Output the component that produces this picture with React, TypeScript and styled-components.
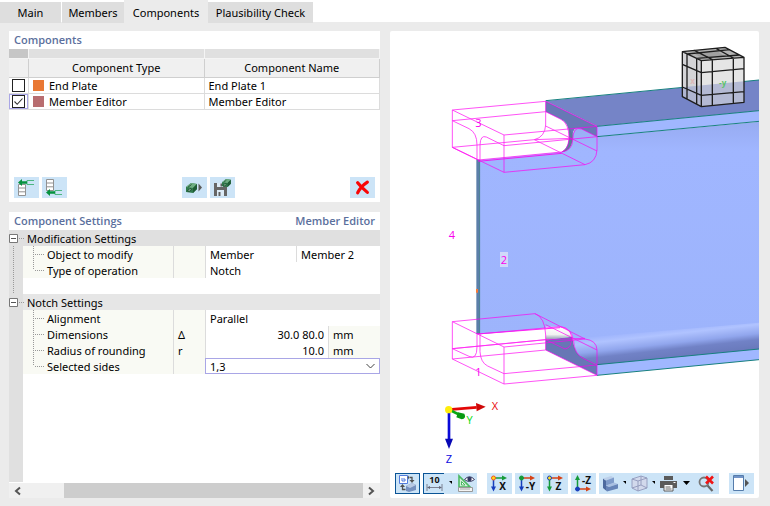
import React, { useState } from "react";
import styled, { createGlobalStyle } from "styled-components";

const GlobalStyle = createGlobalStyle`
  *, *::before, *::after { box-sizing: border-box; }
  body { margin: 0; background: #fff; }
  body, button, select, input { font-family: "Noto Sans", "Open Sans", sans-serif; font-size: 11px; color: #000; }
  button { border: 0; padding: 0; margin: 0; background: none; cursor: pointer; }
  svg { display: block; flex: none; overflow: visible; }
`;

const Page = styled.div`
  display: flex;
  flex-direction: column;
  min-height: 100vh;
`;

const TabBar = styled.nav`
  display: flex;
  align-items: flex-end;
  height: 23px;
  background: linear-gradient(#fff 22px, #ebebeb 22px);
`;

const Tab = styled.button<{ $active?: boolean; $width: number }>`
  width: ${(p) => p.$width}px;
  height: ${(p) => (p.$active ? 23 : 21)}px;
  padding-top: ${(p) => (p.$active ? 2 : 0)}px;
  margin-right: ${(p) => (p.$width === 61 ? 1 : 0)}px;
  background: ${(p) => (p.$active ? "#ebebeb" : "#dedede")};
  white-space: nowrap;
`;

const Workspace = styled.main`
  flex: 1;
  display: grid;
  grid-template-columns: 371fr 369fr;
  gap: 10px;
  padding: 8px 11px 8px 9px;
  background: #ebebeb;
`;

const LeftColumn = styled.div`
  display: flex;
  flex-direction: column;
  gap: 10px;
  min-width: 0;
`;

const Panel = styled.section<{ $grow?: boolean }>`
  display: flex;
  flex-direction: column;
  flex: ${(p) => (p.$grow ? "1" : "none")};
  min-height: ${(p) => (p.$grow ? 0 : 171)}px;
  min-width: 0;
  background: #fff;
`;

const PanelHeader = styled.header`
  display: flex;
  justify-content: space-between;
  height: 18px;
  padding: 0 5px;
  font-family: "Open Sans", sans-serif;
  line-height: 18px;
  font-weight: 600;
  color: #5b6f9d;
`;

const PanelTitle = styled.h2`
  margin: 0;
  font-size: 11px;
  font-weight: 600;
`;

const ComponentTable = styled.table`
  width: 100%;
  table-layout: fixed;
  border-collapse: separate;
  border-spacing: 0;

  th, td { padding: 0; border-right: 1px solid #dcdcdc; border-bottom: 1px solid #dcdcdc; font-weight: 400; }
  td { height: 16px; padding: 0 4px; line-height: 15px; }
  td:first-child { padding: 0; }
`;

const StripCell = styled.td<{ $dark?: boolean }>`
  && { height: 10px; background: ${(p) => (p.$dark ? "#c6c6c6" : "#e0e0e0")}; border-color: #f4f4f4; }
`;

const HeadCell = styled.th`
  && { height: 19px; background: #f0f0f0; border-color: #cfcfcf; line-height: 18px; }
`;

const CheckCell = styled.td<{ $focused?: boolean }>`
  && { box-shadow: ${(p) => (p.$focused ? "inset 0 0 0 1px #a9a6e6" : "none")}; }
`;

const CheckLabel = styled.label`
  display: flex;
  justify-content: center;
`;

const Check = styled.input`
  appearance: none;
  width: 13px;
  height: 13px;
  margin: 0;
  border: 1px solid #222;
  background: #fff;
  &:checked {
    background: #fff url("data:image/svg+xml,%3Csvg xmlns='http://www.w3.org/2000/svg' viewBox='0 0 11 11'%3E%3Cpath d='M1.5 5.5l2.7 2.8 5.3-5.8' fill='none' stroke='%23333' stroke-width='1.1'/%3E%3C/svg%3E");
  }
`;

const TypeLabel = styled.span`
  display: flex;
  align-items: center;
  gap: 5px;
`;

const Swatch = styled.span<{ $color: string }>`
  width: 11px;
  height: 11px;
  background: ${(p) => p.$color};
`;

const ActionBar = styled.div`
  display: flex;
  gap: 3px;
  margin-top: auto;
  padding: 0 5px 4px;
`;

const Spacer = styled.span`
  flex: 1;
`;

const IconButton = styled.button<{ $width?: number; $on?: boolean }>`
  display: flex;
  align-items: center;
  justify-content: center;
  flex: none;
  width: ${(p) => p.$width ?? 25}px;
  height: 21px;
  background: #cce4f7;
  box-shadow: ${(p) => (p.$on ? "inset 0 0 0 1px #0a5496" : "none")};
`;

const SettingsBody = styled.div`
  flex: 1;
  background: linear-gradient(to right, #e0e0e0 14px, #fff 14px);
`;

const SettingsTable = styled.table`
  width: 100%;
  table-layout: fixed;
  border-collapse: separate;
  border-spacing: 0;

  td, th { height: 16px; padding: 2px 4px 0; line-height: 14px; font-weight: 400; text-align: left; white-space: nowrap; }
`;

const GroupCell = styled.th<{ $shade: string }>`
  && { padding: 0; background: linear-gradient(to right, #e0e0e0 14px, ${(p) => p.$shade} 14px); }
`;

const GroupLabel = styled.div`
  display: flex;
  align-items: center;
  gap: 1px;
  height: 16px;
`;

const GroupName = styled.span`
  padding: 2px 0 0 2px;
`;

const GutterCell = styled.td`
  && { padding: 0 4px; background: #e0e0e0; }
`;

const NameCell = styled.th`
  && { padding: 0 0 0 10px; background: #f9faf4; }
`;

const NameLabel = styled.div`
  display: flex;
  gap: 3px;
  height: 16px;
  line-height: 18px;
`;

const SymbolCell = styled.td`
  background: #f9faf4;
  border-left: 1px solid #dcdcdc;
`;

const ValueCell = styled.td<{ $right?: boolean; $unit?: boolean }>`
  border-left: 1px solid #dcdcdc;
  background: ${(p) => (p.$unit ? "#f9faf4" : "#fff")};
  && { text-align: ${(p) => (p.$right ? "right" : "left")}; }
`;

const BlankCell = styled.td`
  background: #fff;
`;

const SelectCell = styled.td`
  && { padding: 0; }
`;

const SelectBox = styled.div`
  display: grid;
  align-items: center;
  height: 16px;
  border: 1px solid #a9a6e6;
  background: #fff;
  > * { grid-area: 1 / 1; }
  > svg { justify-self: end; margin-right: 4px; pointer-events: none; }
`;

const SideSelect = styled.select`
  appearance: none;
  width: 100%;
  height: 14px;
  padding: 1px 4px 0;
  border: 0;
  outline: 0;
  line-height: 14px;
  background: transparent;
`;

const ScrollBar = styled.div`
  display: grid;
  grid-template-columns: 17px 38px 1fr 17px;
  height: 16px;
  border-top: 1px solid #fff;
  background: #f0f0f0;
`;

const ScrollButton = styled.button`
  display: flex;
  align-items: center;
  justify-content: center;
`;

const ScrollThumb = styled.span`
  grid-column: 3;
  background: #cdcdcd;
`;

const Viewport = styled.section`
  display: flex;
  flex-direction: column;
  min-width: 0;
  background: #fff;
  border-radius: 2px;
`;

const Scene = styled.svg`
  flex: 1;
  width: 100%;
  min-height: 0;
  overflow: hidden;
  text { font-family: "Open Sans", sans-serif; font-size: 33px; }
`;

const FaceMark = styled.text`
  && { font-size: 24px; font-weight: 700; }
`;

const ViewToolbar = styled.div`
  display: flex;
  justify-content: space-between;
  padding: 7px 5px 4px;
`;

const ToolSet = styled.div`
  display: flex;
  gap: 3px;
`;

const JoinedTools = styled.div`
  display: flex;
  background: #cce4f7;
`;

const DimensionButton = styled(IconButton)`
  border: 1px solid #0a5496;
  border-right: 0;
`;

const icon = { width: 17, height: 17, viewBox: "0 0 17 17", fill: "none" };

const InsertAbove = () => (
  <svg {...icon}>
    <path d="M.5 5.500h7v11h-7zM.5 9h7M.5 12.800h7" fill="#fff" stroke="#929292" />
    <path d="M16 1.500H9v4h7" stroke="#4db681" />
    <path d="M0 3.500 4 0v2.300h5v2.400H4V7z" fill="#07923f" />
  </svg>
);

const InsertBelow = () => (
  <svg {...icon}>
    <path d="M.5.500h7v11h-7zM.5 4h7M.5 7.800h7" fill="#fff" stroke="#929292" />
    <path d="M16 11.500H9v4h7" stroke="#4db681" />
    <path d="M0 13.500 4 10v2.300h5v2.400H4V17z" fill="#07923f" />
  </svg>
);

const Block = () => (
  <>
    <path d="M0 4 5 0l6 1v5L7 10 0 9z" fill="#2f7a4c" />
    <path d="M0 4 5 0l6 1-4 4z" fill="#6fae83" />
    <path d="M2 4.200 5.500 1.500M1.500 8 4 5.500l1.500 1L3 8.500z" stroke="#123d24" fill="#a9cfb4" strokeWidth=".8" />
    <path d="M7 5v5l4-4V1" fill="#1f5b35" />
  </>
);

const LoadBlock = () => (
  <svg {...icon}>
    <g transform="translate(0 4)"><Block /></g>
    <path d="M12.500 4.500 16 8.500 12.500 12.500z" fill="#5c5c5c" />
  </svg>
);

const SaveBlock = () => (
  <svg {...icon}>
    <path d="M0 4h11l2 2v11H0z" fill="#666" />
    <path d="M3 4h6v4H3z" fill="#dcebf7" />
    <path d="M6.500 4.500h1.500v3H6.500z" fill="#606060" />
    <path d="M3 11h7v6H3z" fill="#dcebf7" />
    <path d="M4.500 13h2v4h-2z" fill="#606060" />
    <g transform="translate(8 0) scale(.8)"><Block /></g>
  </svg>
);

const DeleteIcon = () => (
  <svg {...icon} width="15" height="15">
    <path d="M3 3q4 5 11 11M14 2.500Q7 7 3 14.500" stroke="#f90606" strokeWidth="3.600" strokeLinecap="round" />
  </svg>
);

const SyncViews = () => (
  <svg {...icon}>
    <path d="M.5.500h8v8h-8z" fill="#fff" stroke="#527bdc" />
    <path d="M3 3v3h3V4H4" stroke="#527bdc" />
    <path d="M10.500 2.500h2.500v3.500M3.500 11v3.500h3" stroke="#525252" strokeWidth="1.300" />
    <path d="m10.500 5 2.500 3 2.500-3zM1 12l2.500-3L6 12zM10 .5 8.500 2.500l1.500 2z" fill="#525252" />
    <path d="m7 11 6-3 4 2v5l-7 2-3-1z" fill="#7691bf" />
    <path d="m7 11 6-3 4 2-6 3z" fill="#b9cae4" />
  </svg>
);

const DimensionIcon = () => (
  <svg {...icon}>
    <text x="8.500" y="8" textAnchor="middle" fontSize="9" fontWeight="700" fill="#111">10</text>
    <path d="M1 9v7M16 9v7M2 12.500h13" stroke="#667" strokeWidth=".8" />
    <path d="M1 12.500 4 11v3zM16 12.500 13 11v3z" fill="#667" />
  </svg>
);

const RulerEye = () => (
  <svg {...icon}>
    <path d="M1 1v11h11z" fill="#d5efd9" stroke="#4bb862" strokeWidth="1.600" />
    <path d="M3.500 6.500v3.500h3.500z" fill="#fff" stroke="#4bb862" />
    <path d="M.5 12.500h14v4H.5z" fill="#f4f4f4" stroke="#999" />
    <path d="M3 13v2M5 13v2M7 13v2M9 13v2M11 13v2" stroke="#888" strokeWidth=".7" />
    <path d="M6.500 4.500q5-5.500 10 0-5 4-10 0z" fill="#fff" stroke="#3e4068" />
    <circle cx="11.500" cy="4" r="2.200" fill="#353862" />
  </svg>
);

type AxisProps = { letter: string; across: string; down: string; origin: string; ring: string; up?: boolean };
const AxisView = ({ letter, across, down, origin, ring, up }: AxisProps) => {
  const y = up ? 14 : 3;
  return (
    <svg {...icon}>
      <path d={`M2.500 ${y}h9`} stroke={across} strokeWidth="1.500" />
      <path d={`M11 ${y - 2.5}l5 2.500-5 2.500z`} fill={across} />
      <path d={up ? "M2.500 13V5" : "M2.500 3v9"} stroke={down} strokeWidth="1.500" />
      <path d={up ? "M0 5 2.500 0 5 5z" : "M0 11.500h5l-2.500 5z"} fill={down} />
      <circle cx="2.500" cy={y} r="2" fill={origin} stroke={ring} />
      <text x="11.500" y={up ? 9 : 15} textAnchor="middle" fontSize="10" fontWeight="700" fill="#111">{letter}</text>
    </svg>
  );
};

const SolidModel = () => (
  <svg {...icon}>
    <path d="M1 3.500 4 5.500V15.500L1 13z" fill="#4d6a9f" />
    <path d="M1 3.500 9 1l3 1.500L4 5.500z" fill="#bccfe9" />
    <path d="M4 5.500 12 2.500V8L8 9.500 4 10.500z" fill="#7e9bca" />
    <path d="M4 10.500 12 7.500l4 1.500L7 12z" fill="#a9c0e2" />
    <path d="M4 10.500 7 12l9-3v4.500L5 16.500 4 15.500z" fill="#6684b8" />
  </svg>
);

const WireBox = () => (
  <svg {...icon}>
    <path d="m1 4 9-3 6 2v10l-9 3-6-3z" fill="#d2d9ec" />
    <path d="m1 4 9-3 6 2-9 3zM1 4v9l6 3V6M7 16l9-3V3M10 1v9l6 3M10 10l-9 3" stroke="#9198bb" strokeWidth=".9" />
  </svg>
);

const PrinterIcon = () => (
  <svg {...icon}>
    <path d="M4 1h9v4H4zM0 6h17v7H0z" fill="#5b5b5b" />
    <path d="M4 9.500h9V16H4z" fill="#fff" stroke="#5b5b5b" />
    <path d="M5.500 12h5M5.500 14h6" stroke="#666" />
    <path d="M13.500 7.500h2" stroke="#fff" />
  </svg>
);

const FindCancel = () => (
  <svg {...icon}>
    <circle cx="6" cy="7" r="4.500" stroke="#777" strokeWidth="1.800" />
    <path d="m9.500 10.500 5 5.500" stroke="#676767" strokeWidth="2.200" />
    <path d="m8 1.500 7 7M15 1.500l-7 7" stroke="#f01515" strokeWidth="2.600" />
  </svg>
);

const SidePanelIcon = () => (
  <svg {...icon}>
    <path d="M.5.500h10v15H.5z" fill="#fff" stroke="#557cab" />
    <path d="M1 1h9v2H1z" fill="#7294c8" />
    <path d="m12 4 4 4-4 4z" fill="#555" />
  </svg>
);

const CaretIcon = ({ small }: { small?: boolean }) => (
  <svg width="7" height="5" viewBox="0 0 7 5">
    <path d={small ? "M2 0h3v3L4 2z" : "M0 0h7L3.500 4z"} fill="#000" />
  </svg>
);

const Chevron = () => (
  <svg width="9" height="6" viewBox="0 0 9 6"><path d="m.5 1 4 4 4-4" fill="none" stroke="#444" /></svg>
);

const ScrollArrow = ({ right }: { right?: boolean }) => (
  <svg width="7" height="8" viewBox="0 0 7 8">
    <path d={right ? "m1 0.500 4 3.500-4 3.500" : "m6 0.500-4 3.500 4 3.500"} fill="none" stroke="#555" strokeWidth="2" />
  </svg>
);

const Branch = ({ last }: { last?: boolean }) => (
  <svg width="11" height="16" viewBox="0 0 11 16">
    <path d={`M.5 0V${last ? 8 : 16}M2 8.500h9`} stroke="#999" strokeDasharray="1 1" fill="none" />
  </svg>
);

const Trunk = () => (
  <svg width="1" height="16" viewBox="0 0 1 16"><path d="M.5 0v16" stroke="#999" strokeDasharray="1 1" /></svg>
);

const Expander = () => (
  <svg width="9" height="9" viewBox="0 0 9 9">
    <path d="M.5.500h8v8h-8z" fill="#fff" stroke="#777" />
    <path d="M2 4.500h5" stroke="#555" />
  </svg>
);

const GroupRow = ({ label, shade }: { label: string; shade: string }) => (
  <tr>
    <GroupCell $shade={shade} colSpan={6}>
      <GroupLabel>
        <button aria-label={`Collapse ${label}`}><Expander /></button>
        <svg width="5" height="1" viewBox="0 0 5 1"><path d="M0 .500h5" stroke="#999" strokeDasharray="1 1" /></svg>
        <GroupName>{label}</GroupName>
      </GroupLabel>
    </GroupCell>
  </tr>
);

type RowProps = { name: string; symbol?: string; last?: boolean; trunk?: boolean; children: React.ReactNode };
const SettingRow = ({ name, symbol, last, trunk, children }: RowProps) => (
  <tr>
    <GutterCell>{trunk && <Trunk />}</GutterCell>
    <NameCell scope="row"><NameLabel><Branch last={last} />{name}</NameLabel></NameCell>
    <SymbolCell>{symbol}</SymbolCell>
    {children}
  </tr>
);

const BeamScene = () => (
  <Scene viewBox="15 18 1107 1305" preserveAspectRatio="xMidYMin meet" role="img" aria-label="Notched beam">
    <defs>
      <linearGradient id="web" x1="0" y1="0" x2="0" y2="1">
        <stop offset="0" stopColor="#97abf1" />
        <stop offset=".12" stopColor="#a0b6ff" />
        <stop offset=".9" stopColor="#9db4fc" />
        <stop offset="1" stopColor="#93a9f0" />
      </linearGradient>
      <linearGradient id="fillet" gradientUnits="userSpaceOnUse" x1="850" y1="910" x2="860" y2="1000">
        <stop offset="0" stopColor="#9fb5fd" />
        <stop offset=".2" stopColor="#b0c3ff" />
        <stop offset=".5" stopColor="#91a6ed" />
        <stop offset=".7" stopColor="#7182c6" />
        <stop offset="1" stopColor="#6979bb" />
      </linearGradient>
      <linearGradient id="hollow" x1="0" y1="0" x2="0" y2="1">
        <stop offset="0" stopColor="#fff" />
        <stop offset=".6" stopColor="#f2f3f2" />
        <stop offset="1" stopColor="#8a98ad" />
      </linearGradient>
    </defs>

    <path d="M285 405 530 381Q562 372 562 345Q560 308 585 306L640 335 1122 290V985L636 1020 600 1003Q568 992 565 940Q556 908 525 905L285 928z" fill="url(#web)" />
    <path d="M590 938 1122 893V978L636 1020 600 1003Q568 990 568 942z" fill="url(#fillet)" />
    <path d="M482 228 1122 165V257L636 304z" fill="#7584c7" />
    <path d="M636 304 1122 257V289L636 335z" fill="#a0b7ff" />
    <path d="M482 228 636 304V335L590 312Q565 302 563 330Q565 370 530 382Q555 365 552 325Q550 292 528 283L482 260z" fill="#6878b6" />
    <path d="M550 300Q560 340 545 368L530 382Q565 376 563 330z" fill="#5d7a9b" />
    <path d="M482 905 530 905Q555 912 558 935L482 944z" fill="url(#hollow)" />
    <path d="M482 944 562 935Q568 985 590 995L636 1019V1051L482 975z" fill="#6777b5" />
    <path d="M636 1019 1122 972V1004L636 1051z" fill="#a0b7ff" />
    <path d="M274 404H285V927H274z" fill="#5b7fa9" />
    <path d="M482 227 1122 165M636 304 1122 257M636 335 1122 289M636 1019 1122 972M636 1051 1122 1004" stroke="#17807f" strokeWidth="3" fill="none" />
    <path d="M284 405V926" stroke="#48868d" strokeWidth="2" />
    <path d="M273 792h6v11h-6z" fill="#f77a36" />

    <g fill="none" stroke="#ff00f2" strokeWidth="2.400" opacity=".85">
      <path d="M202 255 482 229 636 304 357 330zM202 255V367L357 442V330M357 442 600 419Q634 412 636 375V304" />
      <path d="M202 287 482 260 528 283Q552 295 552 340Q549 376 530 381L280 405M482 229V300Q480 336 448 344L600 419M202 287 252 311Q276 323 276 360V405M285 405V360Q286 329 304 336L357 362 636 335 590 312Q564 302 563 345Q562 377 530 381M202 367 448 344 560 340M482 303 636 378" />
      <path d="M202 367 280 405M280 409 530 385" strokeWidth="3" />
      <path d="M202 890 450 866Q480 877 482 930V975L636 1051 357 1077 202 1002zM202 890 357 966 600 942Q635 946 636 975V1051M357 966V1077M450 866 600 942" />
      <path d="M202 971 482 944 540 972Q560 970 560 935Q554 907 525 905L280 927M202 971 252 994Q276 1006 276 965V924M285 927V980Q287 1013 308 1023L357 1046 636 1020 600 1003Q567 990 565 945Q560 910 525 905M202 1002 482 975M482 899 636 975M202 971 482 944 600 940" />
      <path d="M276 927 525 908" strokeWidth="3" />
    </g>
    <path d="M345 681h24v45h-24z" fill="#d0d9fa" />
    <g fill="#f900ed" textAnchor="middle">
      <text x="280" y="305">3</text><text x="201" y="641">4</text>
      <text x="357" y="717">2</text><text x="280" y="1053">1</text>
    </g>

    <g transform="translate(825 0)" strokeLinejoin="round">
      <path d="M67 80 195 67 252 97 124 107z" fill="#b4b4b4" />
      <path d="M67 80 124 107V245L67 215z" fill="#d4d4d7" />
      <path d="M124 107 252 97V232L124 245z" fill="#e5e5e5" />
      <path d="M67 187 252 169V232L124 245 67 215z" fill="#a3abce" opacity=".75" />
      <path d="M101 84 170 77 192 92 123 98z" fill="#a0a0a0" />
      <FaceMark x="188" y="184" textAnchor="middle" fill="#5bc36a">-y</FaceMark>
      <FaceMark x="98" y="177" textAnchor="middle" fill="#dcb8b8">x</FaceMark>
      <path d="M67 80 195 67 252 97 124 107zM67 80V215L124 245 252 232V97M124 107V245M157 104V241M220 99V235M81 87V222M110 100V238M67 118 124 143 252 131M67 186 124 211 252 200M81 87 210 74M110 100 238 90M157 104 103 76M220 99 168 70" fill="none" stroke="#1d1d1d" strokeWidth="4" />
    </g>

    <path d="M192 1154 275 1147" stroke="#e30707" strokeWidth="8" />
    <path d="M273 1134 302 1145 275 1159z" fill="#cf0909" />
    <path d="M192 1154V1244" stroke="#0909d9" strokeWidth="8" />
    <path d="M180 1241H204L192 1272z" fill="#0808b5" />
    <path d="M192 1154 225 1170" stroke="#09a914" strokeWidth="8" />
    <path d="M219 1162 238 1166Q245 1180 230 1183L214 1177z" fill="#079b13" />
    <circle cx="191" cy="1154" r="11" fill="#ffed0b" />
    <g textAnchor="middle">
      <text x="330" y="1154" fill="#e80808">X</text>
      <text x="254" y="1196" fill="#07db0b">Y</text>
      <text x="192" y="1314" fill="#0a0adf">Z</text>
    </g>
  </Scene>
);

export default function App() {
  const [tab, setTab] = useState("Components");
  const [checked, setChecked] = useState([false, true]);
  const tabs = [
    { name: "Main", width: 61 },
    { name: "Members", width: 62 },
    { name: "Components", width: 84 },
    { name: "Plausibility Check", width: 105 },
  ];
  const rows = [
    { type: "End Plate", name: "End Plate 1", color: "#e97834" },
    { type: "Member Editor", name: "Member Editor", color: "#b86d70" },
  ];
  return (
    <Page>
      <GlobalStyle />
      <TabBar>
        {tabs.map((t) => (
          <Tab key={t.name} $width={t.width} $active={t.name === tab} onClick={() => setTab(t.name)}>{t.name}</Tab>
        ))}
      </TabBar>
      <Workspace>
        <LeftColumn>
          <Panel>
            <PanelHeader><PanelTitle>Components</PanelTitle></PanelHeader>
            <ComponentTable>
              <colgroup><col style={{ width: 20 }} /><col /><col /></colgroup>
              <thead>
                <tr><StripCell $dark /><StripCell /><StripCell /></tr>
                <tr><HeadCell /><HeadCell>Component Type</HeadCell><HeadCell>Component Name</HeadCell></tr>
              </thead>
              <tbody>
                {rows.map((r, i) => (
                  <tr key={r.type}>
                    <CheckCell $focused={i === 1}>
                      <CheckLabel>
                        <Check
                          type="checkbox"
                          aria-label={r.name}
                          checked={checked[i]}
                          onChange={() => setChecked(checked.map((c, j) => (j === i ? !c : c)))}
                        />
                      </CheckLabel>
                    </CheckCell>
                    <td><TypeLabel><Swatch $color={r.color} />{r.type}</TypeLabel></td>
                    <td>{r.name}</td>
                  </tr>
                ))}
              </tbody>
            </ComponentTable>
            <ActionBar>
              <IconButton aria-label="Insert above"><InsertAbove /></IconButton>
              <IconButton aria-label="Insert below"><InsertBelow /></IconButton>
              <Spacer />
              <IconButton aria-label="Load component"><LoadBlock /></IconButton>
              <IconButton aria-label="Save component"><SaveBlock /></IconButton>
              <Spacer />
              <IconButton aria-label="Delete"><DeleteIcon /></IconButton>
            </ActionBar>
          </Panel>

          <Panel $grow>
            <PanelHeader><PanelTitle>Component Settings</PanelTitle><span>Member Editor</span></PanelHeader>
            <SettingsBody>
              <SettingsTable>
                <colgroup>
                  <col style={{ width: 14 }} /><col style={{ width: 150 }} /><col style={{ width: 32 }} />
                  <col style={{ width: 91 }} /><col style={{ width: 32 }} /><col />
                </colgroup>
                <tbody>
                  <GroupRow label="Modification Settings" shade="#e0e0e0" />
                  <SettingRow name="Object to modify" trunk>
                    <ValueCell>Member</ValueCell><ValueCell colSpan={2}>Member 2</ValueCell>
                  </SettingRow>
                  <SettingRow name="Type of operation" trunk last>
                    <ValueCell colSpan={3}>Notch</ValueCell>
                  </SettingRow>
                  <tr><GutterCell><Trunk /></GutterCell><BlankCell colSpan={5} /></tr>
                  <GroupRow label="Notch Settings" shade="#e6e6e6" />
                  <SettingRow name="Alignment"><ValueCell colSpan={3}>Parallel</ValueCell></SettingRow>
                  <SettingRow name="Dimensions" symbol="Δ">
                    <ValueCell colSpan={2} $right>30.0 80.0</ValueCell><ValueCell $unit>mm</ValueCell>
                  </SettingRow>
                  <SettingRow name="Radius of rounding" symbol="r">
                    <ValueCell colSpan={2} $right>10.0</ValueCell><ValueCell $unit>mm</ValueCell>
                  </SettingRow>
                  <SettingRow name="Selected sides" last>
                    <SelectCell colSpan={3}>
                      <SelectBox>
                        <SideSelect aria-label="Selected sides" defaultValue="1,3">
                          <option>1,3</option><option>1</option><option>3</option>
                        </SideSelect>
                        <Chevron />
                      </SelectBox>
                    </SelectCell>
                  </SettingRow>
                </tbody>
              </SettingsTable>
            </SettingsBody>
            <ScrollBar>
              <ScrollButton aria-label="Scroll left"><ScrollArrow /></ScrollButton>
              <ScrollThumb />
              <ScrollButton aria-label="Scroll right"><ScrollArrow right /></ScrollButton>
            </ScrollBar>
          </Panel>
        </LeftColumn>

        <Viewport>
          <BeamScene />
          <ViewToolbar>
            <ToolSet>
              <IconButton $on aria-label="Synchronize views"><SyncViews /></IconButton>
              <JoinedTools>
                <DimensionButton $width={21} aria-label="Dimensions"><DimensionIcon /></DimensionButton>
                <IconButton $width={12} aria-label="Dimension options"><CaretIcon small /></IconButton>
                <IconButton $width={21} aria-label="Measure visibility"><RulerEye /></IconButton>
              </JoinedTools>
            </ToolSet>
            <ToolSet>
              <IconButton aria-label="View X"><AxisView letter="X" across="#159b3a" down="#173ebd" origin="#ffdd19" ring="#ef5522" /></IconButton>
              <IconButton aria-label="View -Y"><AxisView letter="-Y" across="#d64216" down="#173ebd" origin="#159b3a" ring="#159b3a" /></IconButton>
              <IconButton aria-label="View Z"><AxisView letter="Z" across="#d64216" down="#159b3a" origin="#ffdd19" ring="#173ebd" /></IconButton>
              <IconButton aria-label="View -Z"><AxisView letter="-Z" across="#d64216" down="#159b3a" origin="#173ebd" ring="#173ebd" up /></IconButton>
              <JoinedTools>
                <IconButton $width={22} aria-label="Solid model"><SolidModel /></IconButton>
                <IconButton $width={7} aria-label="Solid model options"><CaretIcon small /></IconButton>
                <IconButton $width={22} aria-label="Transparent box"><WireBox /></IconButton>
                <IconButton $width={7} aria-label="Box options"><CaretIcon small /></IconButton>
                <IconButton $width={22} aria-label="Print"><PrinterIcon /></IconButton>
                <IconButton $width={14} aria-label="Print options"><CaretIcon /></IconButton>
                <IconButton $width={26} aria-label="Reset search"><FindCancel /></IconButton>
              </JoinedTools>
            </ToolSet>
            <IconButton aria-label="Side panel"><SidePanelIcon /></IconButton>
          </ViewToolbar>
        </Viewport>
      </Workspace>
    </Page>
  );
}
